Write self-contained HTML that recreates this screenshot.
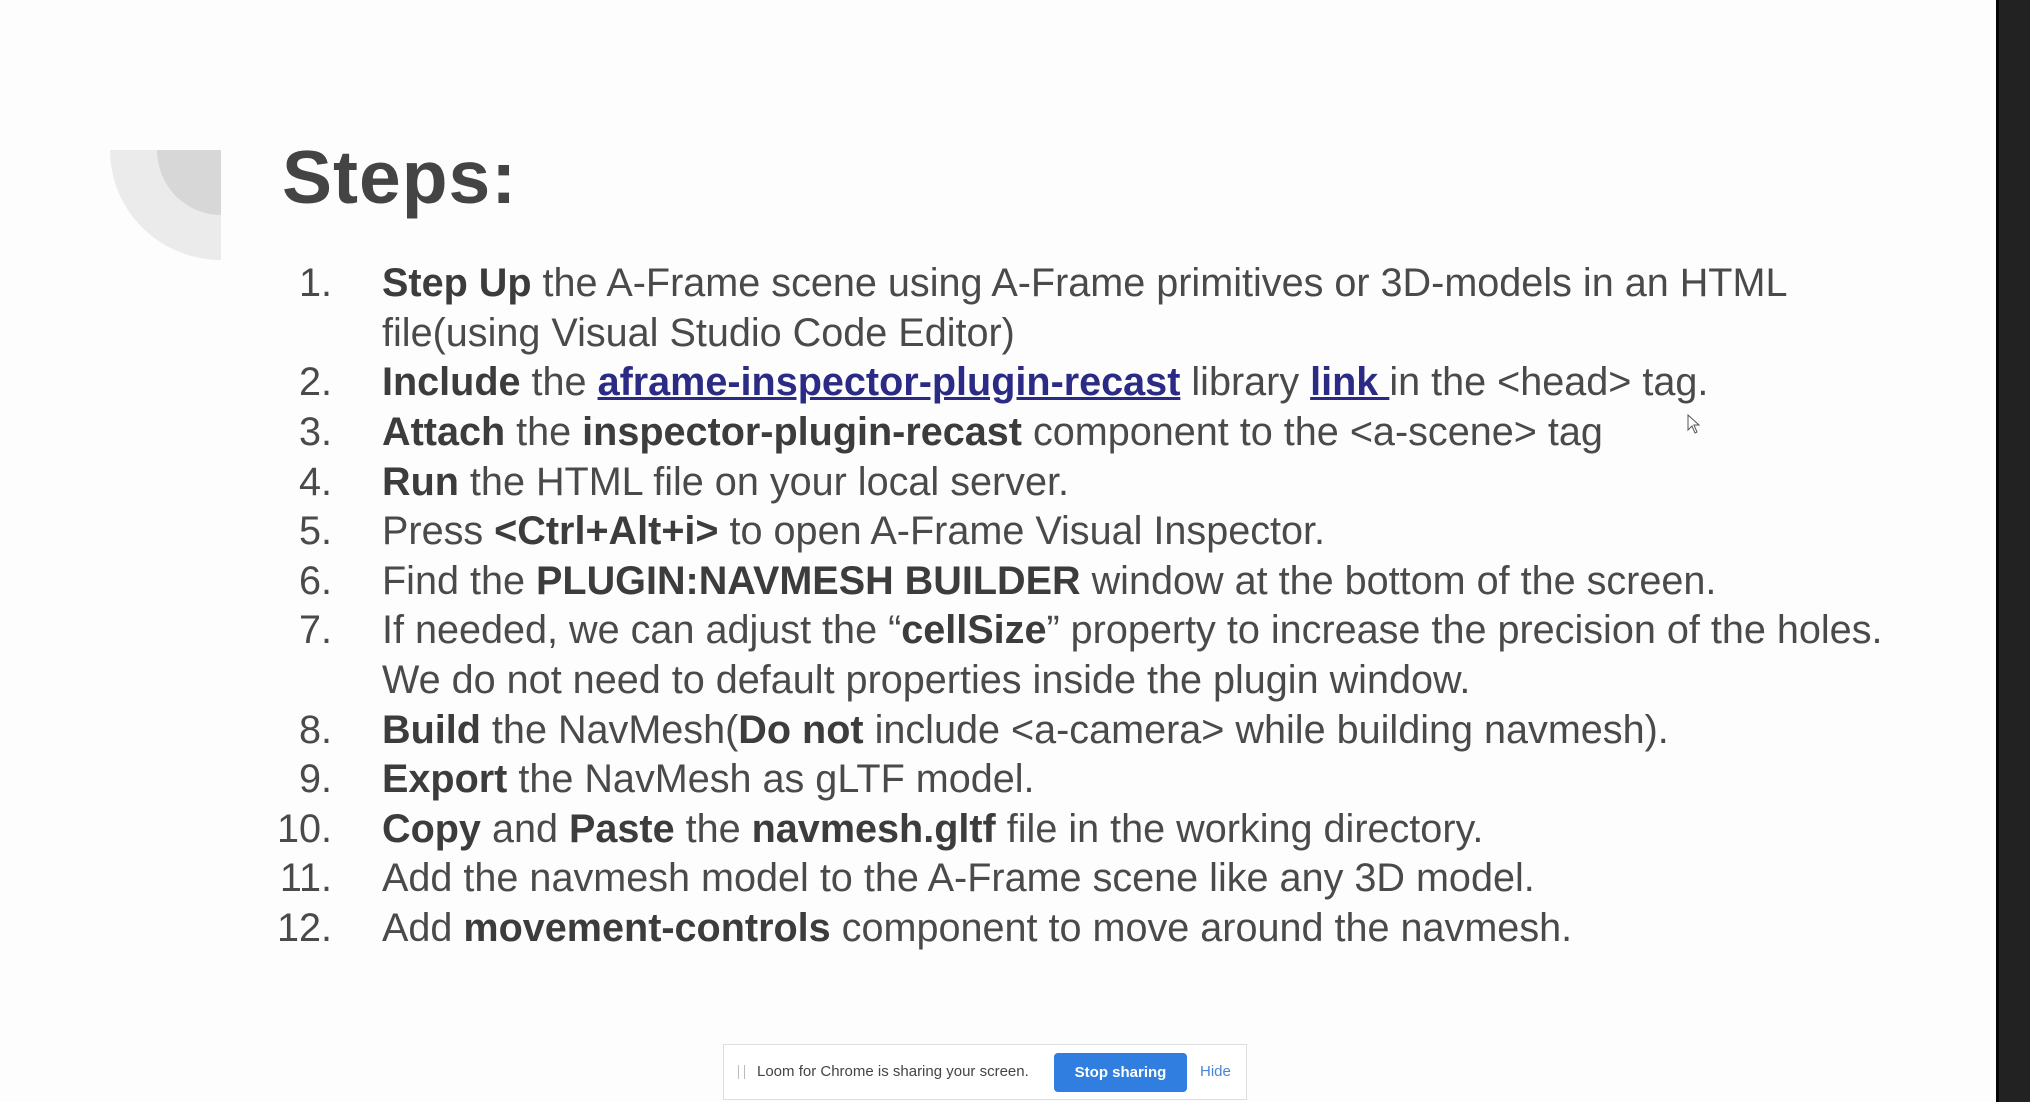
<!DOCTYPE html>
<html><head><meta charset="utf-8"><style>
html,body{margin:0;padding:0;}
body{width:2030px;height:1102px;background:#fdfdfd;position:relative;overflow:hidden;font-family:"Liberation Sans",sans-serif;color:#4a4a4a;}
.dark{position:absolute;left:1996px;top:0;width:34px;height:1102px;background:#222;border-left:3px solid #050505;box-sizing:border-box;}
.deco{position:absolute;left:110px;top:150px;width:111px;height:110px;background:#ebebeb;border-bottom-left-radius:111px 110px;}
.deco2{position:absolute;left:157px;top:150px;width:64px;height:65px;background:#d7d7d7;border-bottom-left-radius:64px 65px;}
h1{position:absolute;left:282px;top:127px;margin:0;font-size:75px;font-weight:bold;color:#444;line-height:100px;letter-spacing:1px;}
.row{position:absolute;left:0;height:50px;line-height:50px;font-size:39.6px;white-space:nowrap;}
.num{position:absolute;left:0;width:332px;text-align:right;}
.txt{position:absolute;left:382px;}
b{color:#3c3c3c;}
a{color:#2b2b86;text-decoration:underline;font-weight:bold;}
.bar{position:absolute;left:723px;top:1044px;width:524px;height:56px;background:#fff;border:1px solid #ddd;box-sizing:border-box;font-size:15px;color:#444;}
.bar .grip{position:absolute;left:14px;top:20px;width:5px;height:14px;border-left:1px solid #bbb;border-right:1px solid #bbb;}
.bar .t{position:absolute;left:33px;top:18px;}
.bar .btn{position:absolute;left:330px;top:8px;width:133px;height:39px;background:#2f7ee0;border-radius:4px;color:#fff;font-weight:bold;text-align:center;line-height:39px;}
.bar .hide{position:absolute;left:476px;top:18px;color:#4a86d6;}
</style></head><body>
<div class="deco"></div><div class="deco2"></div>
<h1>Steps:</h1>
<div class="row" style="top:258px"><span class="num">1.</span><span class="txt"><b>Step Up</b> the A-Frame scene using A-Frame primitives or 3D-models in an HTML</span></div>
<div class="row" style="top:308px"><span class="txt">file(using Visual Studio Code Editor)</span></div>
<div class="row" style="top:357px"><span class="num">2.</span><span class="txt"><b>Include</b> the <a>aframe-inspector-plugin-recast</a> library <a>link </a>in the &lt;head&gt; tag.</span></div>
<div class="row" style="top:407px"><span class="num">3.</span><span class="txt"><b>Attach</b> the <b>inspector-plugin-recast</b> component to the &lt;a-scene&gt; tag</span></div>
<div class="row" style="top:457px"><span class="num">4.</span><span class="txt"><b>Run</b> the HTML file on your local server.</span></div>
<div class="row" style="top:506px"><span class="num">5.</span><span class="txt">Press <b>&lt;Ctrl+Alt+i&gt;</b> to open A-Frame Visual Inspector.</span></div>
<div class="row" style="top:556px"><span class="num">6.</span><span class="txt">Find the <b>PLUGIN:NAVMESH BUILDER</b> window at the bottom of the screen.</span></div>
<div class="row" style="top:605px"><span class="num">7.</span><span class="txt">If needed, we can adjust the “<b>cellSize</b>” property to increase the precision of the holes.</span></div>
<div class="row" style="top:655px"><span class="txt">We do not need to default properties inside the plugin window.</span></div>
<div class="row" style="top:705px"><span class="num">8.</span><span class="txt"><b>Build</b> the NavMesh(<b>Do not</b> include &lt;a-camera&gt; while building navmesh).</span></div>
<div class="row" style="top:754px"><span class="num">9.</span><span class="txt"><b>Export</b> the NavMesh as gLTF model.</span></div>
<div class="row" style="top:804px"><span class="num">10.</span><span class="txt"><b>Copy</b> and <b>Paste</b> the <b>navmesh.gltf</b> file in the working directory.</span></div>
<div class="row" style="top:853px"><span class="num">11.</span><span class="txt">Add the navmesh model to the A-Frame scene like any 3D model.</span></div>
<div class="row" style="top:903px"><span class="num">12.</span><span class="txt">Add <b>movement-controls</b> component to move around the navmesh.</span></div>
<svg style="position:absolute;left:1687px;top:414px" width="14" height="20" viewBox="0 0 14 20"><path d="M1 1 L1 16 L5 12 L8 19 L10 18 L7 11 L12 11 Z" fill="#fff" stroke="#555" stroke-width="1"/></svg>
<div class="bar"><div class="grip"></div><span class="t">Loom for Chrome is sharing your screen.</span><div class="btn">Stop sharing</div><span class="hide">Hide</span></div>
<div class="dark"></div>
</body></html>
